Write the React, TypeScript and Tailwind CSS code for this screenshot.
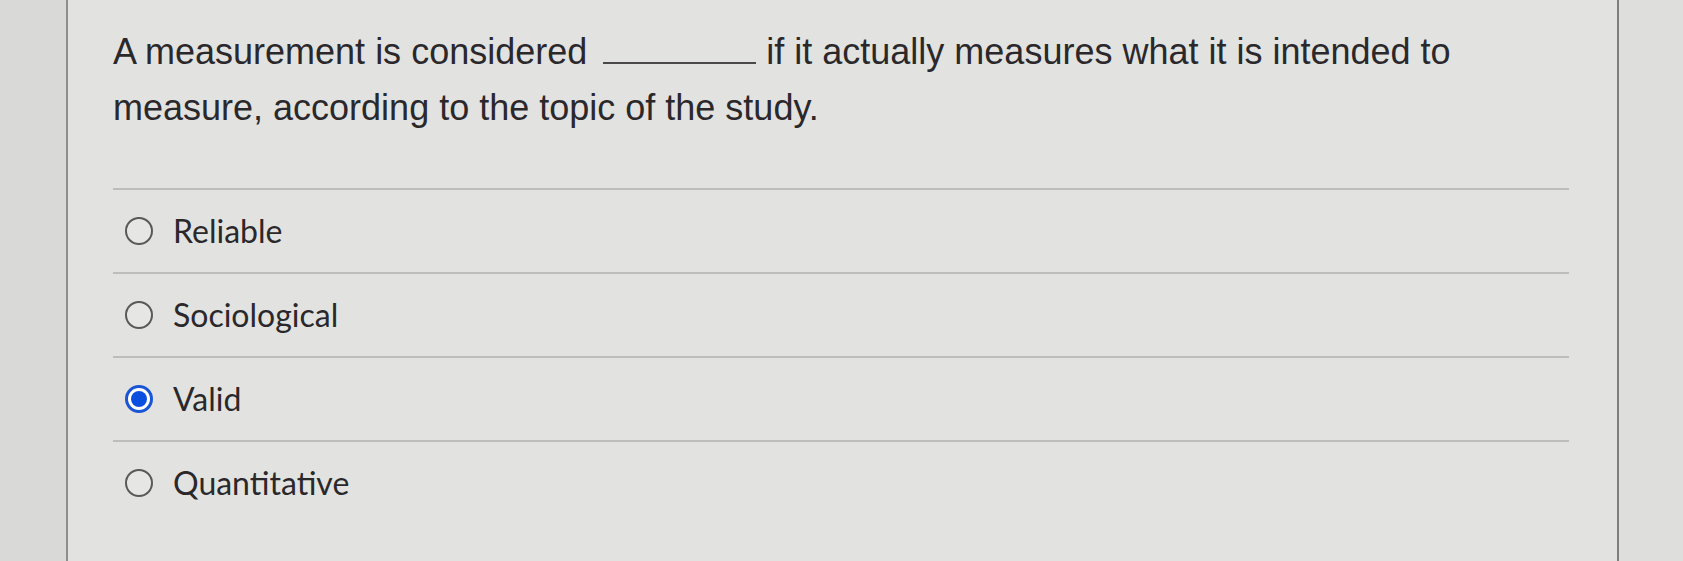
import React from 'react';

const options = [
  { label: 'Reliable', checked: false },
  { label: 'Sociological', checked: false },
  { label: 'Valid', checked: true },
  { label: 'Quantitative', checked: false },
];

const Radio: React.FC<{ checked: boolean }> = ({ checked }) =>
  checked ? (
    <span className="flex h-[28px] w-[28px] shrink-0 items-center justify-center rounded-full border-[3px] border-[#1a55d6] bg-white">
      <span className="h-[16px] w-[16px] rounded-full bg-[#0b4fe0]"></span>
    </span>
  ) : (
    <span className="h-[28px] w-[28px] shrink-0 rounded-full border-2 border-[#5a5858] bg-[#e6e7e4]"></span>
  );

export default function App() {
  return (
    <div className="flex h-[561px] w-full overflow-hidden bg-[#dcdddb]">
      <div className="w-[68px] shrink-0 border-r-2 border-[#8e8f8d] bg-[#d9dad8]"></div>

      <div className="flex-1 bg-[#e2e3e0] pl-[45px] pr-[48px] pt-[24px]">
        <p className="font-['Liberation_Sans',Arial,sans-serif] text-[36px] leading-[56px] text-[#2b282c]">
          A measurement is considered{' '}
          <span className="ml-[6px] inline-block w-[153px] border-b-2 border-[#4a4848] align-baseline"></span>{' '}
          if it actually measures what it is intended to
          <br />
          measure, according to the topic of the study.
        </p>

        <div className="mt-[52px]">
          {options.map((opt) => (
            <div key={opt.label} className="border-t-2 border-[#bdbebb]">
              <div className="flex h-[82px] items-center gap-[20px] pl-[12px]">
                <Radio checked={opt.checked} />
                <span className="font-['Lato','Noto_Sans',sans-serif] text-[32px] text-[#2a282b]">
                  {opt.label}
                </span>
              </div>
            </div>
          ))}
        </div>
      </div>

      <div className="w-[66px] shrink-0 border-l-2 border-[#7e7f7d] bg-[#dedfdc]"></div>
    </div>
  );
}
